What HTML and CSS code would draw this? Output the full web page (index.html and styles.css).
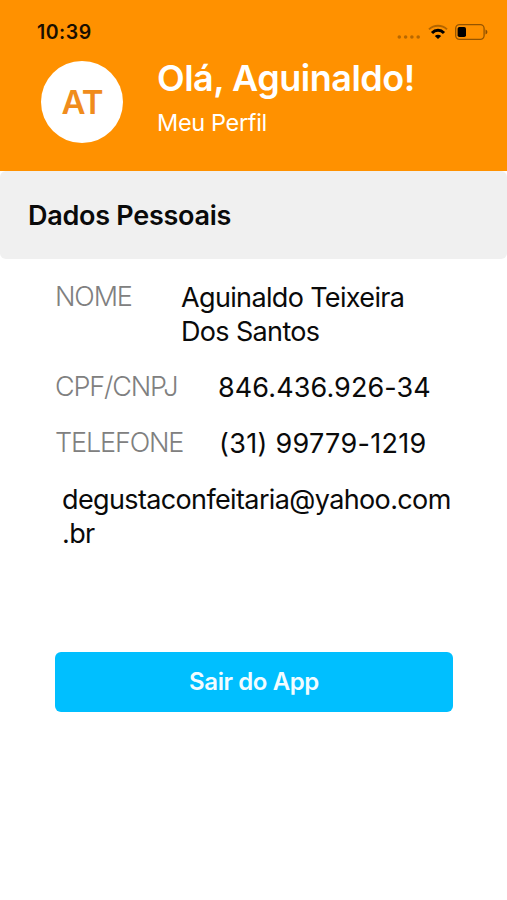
FILE: index.html
```html
<!DOCTYPE html>
<html lang="pt-BR">
<head>
    <meta charset="UTF-8">
    <meta name="viewport" content="width=device-width, initial-scale=1.0">
    <title>Meu Perfil</title>
    <link rel="stylesheet" href="styles.css">
</head>
<body>

    <header class="header">
        <div class="status-bar">
            <span class="time">10:39</span>
            <div class="status-icons">
                <svg class="signal" width="24" height="4" viewBox="0 0 24 4">
                    <circle cx="2.3" cy="2" r="1.8"/>
                    <circle cx="8.6" cy="2" r="1.8"/>
                    <circle cx="14.9" cy="2" r="1.8"/>
                    <circle cx="21.2" cy="2" r="1.8"/>
                </svg>
                <svg class="wifi" width="20" height="15" viewBox="0 0 20 15">
                    <path d="M1 5.4C6 .6 14 .6 19 5.4" fill="none" stroke="#000" stroke-opacity=".3" stroke-width="2"/>
                    <path d="M4 9C7.4 5.4 12.6 5.4 16 9" fill="none" stroke="#000" stroke-width="3"/>
                    <path d="M10 15L6.8 12C8.6 10.2 11.4 10.2 13.2 12Z"/>
                </svg>
                <svg class="battery" width="33" height="16" viewBox="0 0 33 16">
                    <rect x=".7" y=".7" width="28.4" height="14.6" rx="3.8" fill="none" stroke="#000" stroke-opacity=".42" stroke-width="1.3"/>
                    <rect x="2.6" y="2.9" width="8.4" height="10.2" rx="1.8"/>
                    <path d="M30.5 5.5C33 6.3 33 9.7 30.5 10.5Z" fill-opacity=".45"/>
                </svg>
            </div>
        </div>
        <div class="profile">
            <div class="avatar">AT</div>
            <div class="greeting">
                <h1>Olá, Aguinaldo!</h1>
                <p>Meu Perfil</p>
            </div>
        </div>
    </header>

    <h2 class="section-title">Dados Pessoais</h2>

    <main class="content">
        <dl class="info">
            <div class="row row-name">
                <dt>NOME</dt>
                <dd>Aguinaldo Teixeira<br>Dos Santos</dd>
            </div>
            <div class="row">
                <dt>CPF/CNPJ</dt>
                <dd class="number">846.436.926-34</dd>
            </div>
            <div class="row">
                <dt>TELEFONE</dt>
                <dd class="number phone">(31) 99779-1219</dd>
            </div>
        </dl>
        <p class="email">degustaconfeitaria@yahoo.com<br>.br</p>
        <button type="button" class="logout">Sair do App</button>
    </main>

</body>
</html>
```

FILE: styles.css
```css
:root {
    --primary-color: #ff9100;
    --button-color: #00bfff;
    --section-background: #f0f0f0;
    --text-color: #0a0a0a;
    --label-color: #808080;
}

* {
    box-sizing: border-box;
}

body {
    margin: 0;
    min-height: 100vh;
    background: #fff;
    color: var(--text-color);
    font-family: Inter, Roboto, sans-serif;
}

h1, h2, p, dl, dd {
    margin: 0;
}

/* Header */
.header {
    height: 171px;
    background: var(--primary-color);
}

.status-bar {
    display: flex;
    justify-content: space-between;
    height: 56px;
    padding: 20px 19px 0 37px;
}

.time {
    color: #1a0f00;
    font-size: 19.5px;
    font-weight: 600;
    line-height: 24px;
    letter-spacing: 0.5px;
}

.status-icons {
    display: flex;
    align-items: flex-start;
    padding-top: 4px;
}

.signal {
    margin-top: 11px;
    fill: #000;
    fill-opacity: .28;
}

.wifi {
    margin-left: 7px;
}

.battery {
    margin-left: 7px;
}

.profile {
    display: flex;
    padding: 0 41px;
}

.avatar {
    display: flex;
    align-items: center;
    justify-content: center;
    width: 82px;
    height: 82px;
    margin-top: 5px;
    border-radius: 50%;
    background: #fff;
    color: #f08c1c;
    font-size: 33px;
    font-weight: 600;
    letter-spacing: -1px;
}

.greeting {
    margin-left: 34px;
    color: #fff;
    white-space: nowrap;
}

.greeting h1 {
    font-size: 36px;
    font-weight: 600;
    line-height: 44px;
    letter-spacing: -0.5px;
}

.greeting p {
    margin-top: 8px;
    font-size: 23.5px;
    font-weight: 400;
    line-height: 30px;
    letter-spacing: -0.35px;
}

/* Section heading */
.section-title {
    height: 88px;
    padding-left: 28px;
    border-radius: 6px;
    background: var(--section-background);
    font-size: 27px;
    font-weight: 600;
    line-height: 90px;
    letter-spacing: -0.27px;
}

/* Personal data */
.content {
    padding: 22px 54px 0 55px;
}

.info {
    font-size: 27px;
    line-height: 34px;
    letter-spacing: -0.65px;
}

.row {
    display: grid;
    grid-template-columns: 163px 1fr;
    margin-bottom: 22px;
    white-space: nowrap;
}

.row-name {
    grid-template-columns: 126px 1fr;
}

.row dt {
    margin-top: -1px;
    color: var(--label-color);
    font-weight: 300;
    letter-spacing: -1.15px;
}

.number {
    letter-spacing: 0.1px;
}

.phone {
    padding-left: 1px;
    letter-spacing: 0.3px;
}

.email {
    padding-left: 7px;
    font-size: 27px;
    line-height: 34px;
    letter-spacing: -0.63px;
}

.logout {
    display: block;
    width: 398px;
    height: 60px;
    margin-top: 101px;
    padding: 0 0 2px;
    border: none;
    border-radius: 6px;
    background: var(--button-color);
    color: #f2fcff;
    font-family: inherit;
    font-size: 24px;
    font-weight: 600;
    letter-spacing: -0.4px;
    cursor: pointer;
}
```
